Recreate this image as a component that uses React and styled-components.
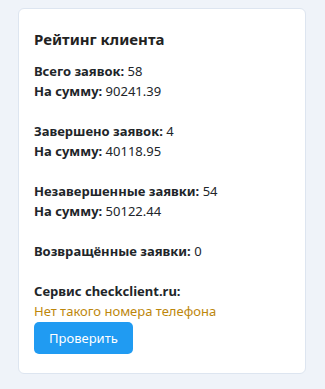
import React from 'react';
import styled, { createGlobalStyle } from 'styled-components';

const GlobalStyle = createGlobalStyle`
  body {
    margin: 0;
    background: #eff3f9;
    font-family: "Noto Sans", "Liberation Sans", sans-serif;
    color: #212529;
  }
`;

const Page = styled.div`
  padding: 8px 19px 15px 18px;
`;

const Card = styled.div`
  background: #fff;
  border: 1px solid #dde5f0;
  border-radius: 6px;
  padding: 19px 16px 19px 15px;
`;

const Title = styled.h3`
  margin: 0 0 11px;
  font-size: 15px;
  line-height: 22px;
  font-weight: 700;
  color: #222;
`;

const Group = styled.div`
  font-size: 13px;
  line-height: 20px;
  margin-bottom: ${props => (props.last ? '0' : '20px')};
`;

const Line = styled.div`
  b {
    font-weight: 700;
  }
`;

const Notice = styled.div`
  color: #bd870c;
`;

const Button = styled.button`
  margin-top: 1px;
  height: 32px;
  padding: 0 15px;
  border: none;
  border-radius: 5px;
  background: #209bf2;
  color: #fff;
  font-family: inherit;
  font-size: 13px;
  cursor: pointer;
`;

const stats = [
  [['Всего заявок:', '58'], ['На сумму:', '90241.39']],
  [['Завершено заявок:', '4'], ['На сумму:', '40118.95']],
  [['Незавершенные заявки:', '54'], ['На сумму:', '50122.44']],
  [['Возвращённые заявки:', '0']],
];

export default function App() {
  return (
    <>
      <GlobalStyle />
      <Page>
        <Card>
          <Title>Рейтинг клиента</Title>
          {stats.map((group, i) => (
            <Group key={i}>
              {group.map(([label, value]) => (
                <Line key={label}>
                  <b>{label}</b> {value}
                </Line>
              ))}
            </Group>
          ))}
          <Group last>
            <Line>
              <b>Сервис checkclient.ru:</b>
            </Line>
            <Notice>Нет такого номера телефона</Notice>
            <Button>Проверить</Button>
          </Group>
        </Card>
      </Page>
    </>
  );
}
